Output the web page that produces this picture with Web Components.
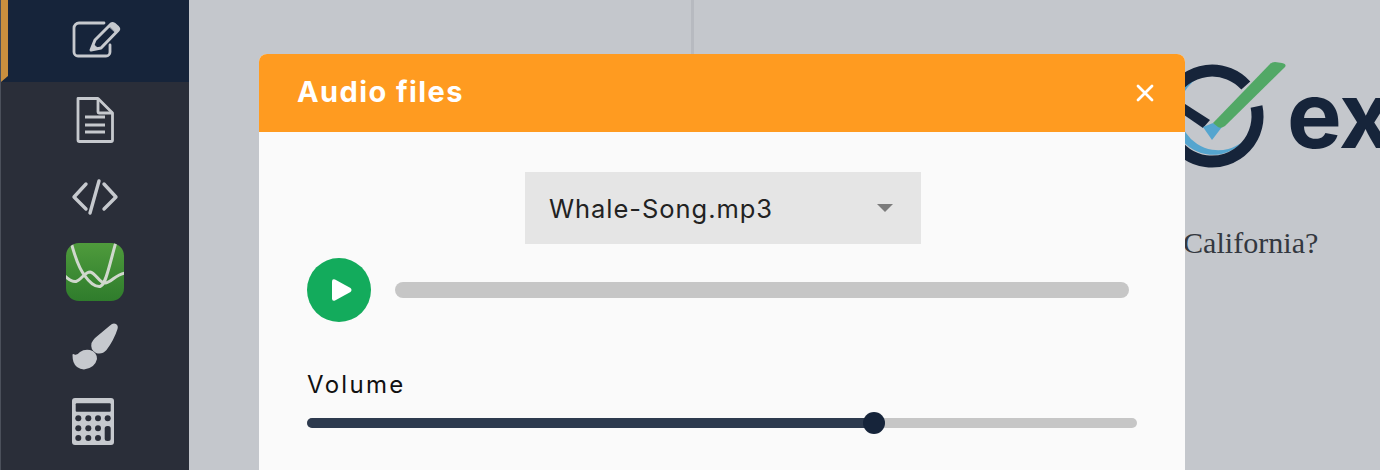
<!DOCTYPE html>
<html>
<head>
<meta charset="utf-8">
<title>Audio files</title>
<style>
  html, body { margin: 0; height: 100%; overflow: hidden; }
  body { display: flex; height: 470px; position: relative; background: #c4c7cc; }
  rail-item svg { overflow: visible; }
</style>
</head>
<body>
  <tool-rail>
    <rail-item active><svg viewBox="0 0 48 48" width="48" height="48" fill="none" stroke="#c6c9ce" stroke-width="2.8" stroke-linecap="round" stroke-linejoin="round"><path d="M33 6H8a5 5 0 0 0-5 5v24a4 4 0 0 0 4 4h28a4 4 0 0 0 4-4v-7"/><path d="M20 33l4-10L40 7q1.500-1 3 0l4 3.500q1.500 1.500 0 3L30 31z" stroke-width="3"/><path d="M38 9l3-2.500 7 5.500-3 3.500z" fill="#c6c9ce" stroke-width="1"/><path d="M20 33l2-6 4.500 4z" fill="#c6c9ce" stroke-width="1"/></svg></rail-item>
    <rail-item><svg viewBox="0 0 44 48" width="44" height="48" fill="none" stroke="#c6c9ce" stroke-width="2.8" stroke-linejoin="round"><path d="M5 2.500h20l14.500 14.500v27a1.500 1.500 0 0 1-1.500 1.500H6.500A1.500 1.500 0 0 1 5 44z"/><path d="M25 2.500V16a1 1 0 0 0 1 1h13.500"/><path d="M12 21h20M12 29h20M12 36h20" stroke-width="3.200"/></svg></rail-item>
    <rail-item><svg viewBox="0 0 48 40" width="48" height="40" fill="none" stroke="#c6c9ce" stroke-width="3.400" stroke-linecap="round" stroke-linejoin="round"><path d="M15 8L3 21l12 12"/><path d="M33 8l12 13-12 12"/><path d="M28 5l-9 32"/></svg></rail-item>
    <rail-item><svg viewBox="0 0 58 58" width="58" height="58"><defs><linearGradient id="g" x1="0" y1="0" x2="0" y2="1"><stop offset="0" stop-color="#4f9b3c"/><stop offset=".55" stop-color="#3c8a33"/><stop offset="1" stop-color="#2f7c2c"/></linearGradient><clipPath id="gc"><rect width="58" height="58" rx="13"/></clipPath></defs><rect width="58" height="58" rx="13" fill="url(#g)"/><g clip-path="url(#gc)" fill="none" stroke="#d0d8cd" stroke-width="3"><path d="M5-1C9 14 14 27 19 33c4 6 10 11 15 10.500 4-1.500 6-8.500 8-15.500 3-10 5-19 8-29"/><path d="M-1 33c4 4 7 6 11 5.500 5-1.500 9-9.500 14-9.500 6 1 9 11 15 11 6 0 11-9 20-10"/></g></svg></rail-item>
    <rail-item><svg viewBox="0 2 48 48" width="48" height="48" fill="#c6c9ce"><path d="M39 3.500Q42 .5 45 2q2.500 1.500 1.500 5Q43 18 35.500 28 31 33 25 31q-6-3-4.500-10 1.500-3 3.500-5z"/><path d="M1.500 33q0-1.500 2-.5 2.500 1 5.500-2.500 4-3 10-2 7 2 7 9-2 9-13 10.500-8-.5-10.500-7.500-1-3-1-7z"/></svg></rail-item>
    <rail-item><svg viewBox="2 2 44 48" width="44" height="48"><rect x="1" y="0" width="42" height="47" rx="3" fill="#c6c9ce"/><g fill="#2a2e39"><rect x="4.700" y="5.300" width="35" height="8.400" rx="1"/><circle cx="7.300" cy="20.300" r="3"/><circle cx="17.300" cy="20.300" r="3"/><circle cx="27" cy="20.300" r="3"/><circle cx="36.700" cy="20.300" r="3"/><circle cx="7.300" cy="30.300" r="3"/><circle cx="17.300" cy="30.300" r="3"/><circle cx="27" cy="30.300" r="3"/><circle cx="7.300" cy="40" r="3"/><circle cx="17.300" cy="40" r="3"/><circle cx="27" cy="40" r="3"/><rect x="33.700" y="28" width="6" height="15" rx="2.500"/></g></svg></rail-item>
  </tool-rail>
  <passage-pane></passage-pane>
  <question-pane>
    <brand-logo></brand-logo>
    <p slot="question">California?</p>
  </question-pane>
  <audio-dialog heading="Audio files" file="Whale-Song.mp3"></audio-dialog>

<script>
class ToolRail extends HTMLElement {
  constructor() {
    super();
    this.attachShadow({ mode: 'open' }).innerHTML = `<style>
      :host { display: flex; flex-direction: column; width: 189px; height: 470px; flex: none; background: #2a2e39; border-left: 1px solid #4b505b; box-sizing: border-box; }
    </style><slot></slot>`;
  }
}
customElements.define('tool-rail', ToolRail);

class RailItem extends HTMLElement {
  constructor() {
    super();
    this.attachShadow({ mode: 'open' }).innerHTML = `<style>
      :host { display: flex; align-items: center; justify-content: center; height: 76px; position: relative; }
      :host([active]) { height: 82px; background: #16243a; }
      :host([active])::before { content: ''; position: absolute; left: 0; top: 0; width: 7px; height: 82px; background: #c98f3e; clip-path: polygon(0 0, 100% 0, 100% 76px, 0 100%); }
    </style><slot></slot>`;
  }
}
customElements.define('rail-item', RailItem);

class PassagePane extends HTMLElement {
  constructor() {
    super();
    this.attachShadow({ mode: 'open' }).innerHTML = `<style>
      :host { display: block; width: 505px; height: 470px; flex: none; border-right: 3px solid #b7bac0; box-sizing: border-box; }
    </style>`;
  }
}
customElements.define('passage-pane', PassagePane);

class QuestionPane extends HTMLElement {
  constructor() {
    super();
    this.attachShadow({ mode: 'open' }).innerHTML = `<style>
      :host { display: block; flex: 1; min-width: 0; overflow: hidden; padding: 62px 0 0 467px; box-sizing: border-box; }
      .q { margin: 58px 0 0 22px; font: 30.1px/34px "Liberation Serif", serif; color: #33383f; white-space: nowrap; }
      ::slotted(p) { margin: 0; }
    </style><slot></slot><div class="q"><slot name="question"></slot></div>`;
  }
}
customElements.define('question-pane', QuestionPane);

class BrandLogo extends HTMLElement {
  constructor() {
    super();
    this.attachShadow({ mode: 'open' }).innerHTML = `<style>
      :host { display: flex; align-items: center; height: 106px; }
      svg { flex: none; overflow: visible; }
      span { font: 700 92px/106px Inter, sans-serif; color: #16243a; letter-spacing: -1px; }
    </style><svg width="126" height="106" viewBox="0 0 126 106">
      <path d="M39 15A40 40 0 1 0 81.600 79.700 38.900 38.900 0 1 1 39 15z" fill="#55a5cf"/>
      <path d="M95.500 44.500A45.500 45.500 0 1 1 84.800 23.600" fill="none" stroke="#16243a" stroke-width="12"/>
      <path d="M10 33l39 25-7 8L10 44z" fill="#16243a"/>
      <path d="M42 65l9 13 10-13-9-4z" fill="#55a5cf"/>
      <path d="M52 61L109 2q2-2 5-2l7 1q5 1 3 4L64 64q-4 3-7 1z" fill="#52a866"/>
    </svg><span>ex</span>`;
  }
}
customElements.define('brand-logo', BrandLogo);

class AudioDialog extends HTMLElement {
  constructor() {
    super();
    this.attachShadow({ mode: 'open' }).innerHTML = `<style>
      :host { display: block; position: absolute; left: 259px; top: 54px; width: 926px; height: 416px; background: #fafafa; border-radius: 8px 8px 0 0; overflow: hidden; }
      header { display: flex; align-items: center; justify-content: space-between; height: 78px; padding: 0 30px 4px 38px; box-sizing: border-box; background: #ff9b20; color: #fff; }
      header svg { margin-top: 4px; }
      h2 { margin: 0; font: 700 29px/1 Inter, sans-serif; letter-spacing: 1.4px; }
      .body { display: flex; flex-direction: column; padding: 40px 48px 0; }
      .pick { align-self: center; margin-left: 2px; box-sizing: border-box; width: 396px; height: 72px; display: flex; align-items: center; justify-content: space-between; padding: 2px 28px 0 24px; background: #e5e5e5; font: 400 25.5px/1 Inter, sans-serif; letter-spacing: .95px; color: #222; }
      .caret { width: 0; height: 0; margin-top: -2px; border: 8px solid transparent; border-top: 8px solid #7c7c7c; border-bottom: 0; }
      .player { display: flex; align-items: center; gap: 24px; margin-top: 14px; }
      .play { width: 64px; height: 64px; border-radius: 50%; background: #13ab5c; display: flex; align-items: center; justify-content: center; flex: none; }
      .play svg { overflow: visible; }
      .track { flex: 1; height: 16px; border-radius: 8px; background: #c6c6c6; margin-right: 8px; }
      label { display: block; margin: 48px 0 0; font: 400 24px/30px Inter, sans-serif; letter-spacing: 2.3px; color: #111; }
      .vol { position: relative; height: 10px; margin: 18px 0 0; border-radius: 5px; background: #c6c6c6; }
      .vol i { display: block; width: 68%; height: 100%; border-radius: 5px; background: #2d3a4e; }
      .vol b { position: absolute; left: 556px; top: -6px; width: 22px; height: 22px; border-radius: 50%; background: #16243a; }
    </style>
    <header><h2></h2><svg width="20" height="20" viewBox="0 0 20 20" stroke="#fff" stroke-width="2.800" stroke-linecap="round"><path d="M3 3l14 14M17 3L3 17"/></svg></header>
    <div class="body">
      <div class="pick"><span class="file"></span><span class="caret"></span></div>
      <div class="player"><div class="play"><svg width="24" height="24" viewBox="0 0 24 24"><path d="M5 3.500q0-3 3-2l15.500 8.500q2 2 0 4L8 22.500q-3 1-3-2z" fill="#fff"/></svg></div><div class="track"></div></div>
      <label>Volume</label>
      <div class="vol"><i></i><b></b></div>
    </div>`;
  }

  connectedCallback() {
    this.shadowRoot.querySelector('h2').textContent = this.getAttribute('heading');
    this.shadowRoot.querySelector('.file').textContent = this.getAttribute('file');
  }
}
customElements.define('audio-dialog', AudioDialog);
</script>
</body>
</html>
